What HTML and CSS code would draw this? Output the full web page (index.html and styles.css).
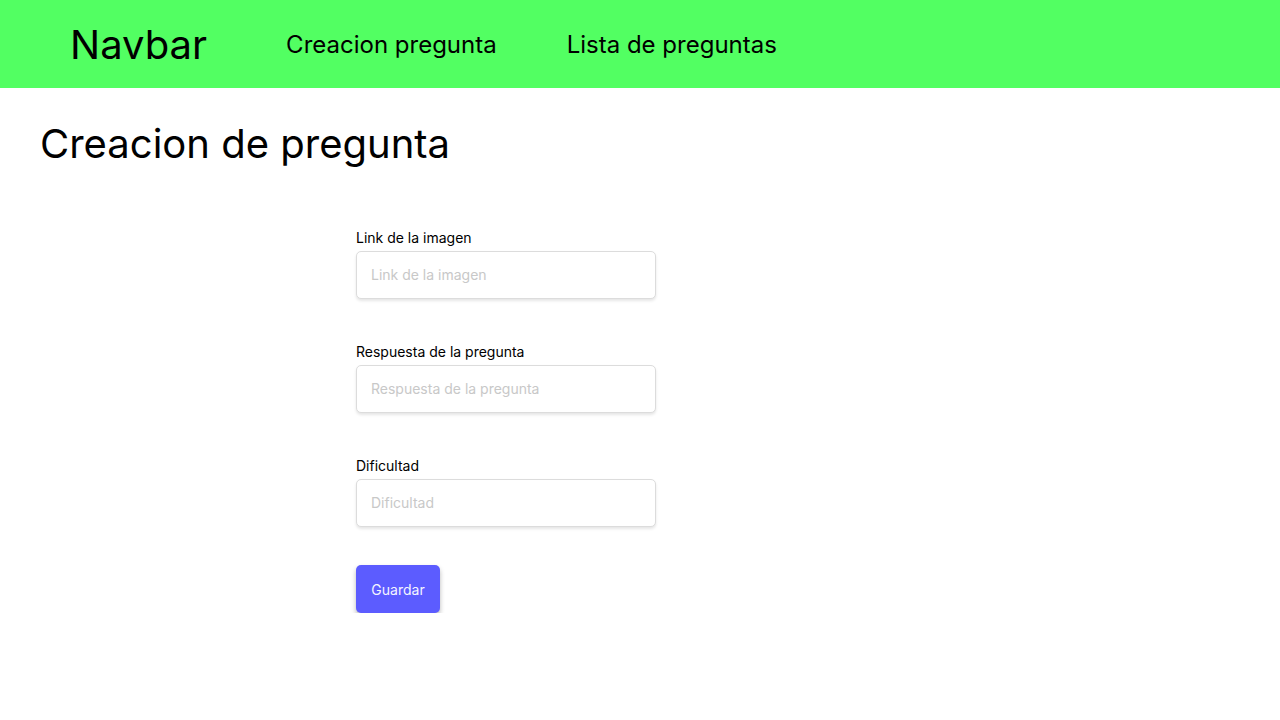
FILE: index.html
```html
<!DOCTYPE html>
<html lang="es">
<head>
<meta charset="utf-8">
<title>Creacion de pregunta</title>
<link rel="stylesheet" href="styles.css">
</head>
<body>
<nav class="navbar">
  <span class="brand">Navbar</span>
  <a class="nav-link" href="#">Creacion pregunta</a>
  <a class="nav-link" href="#">Lista de preguntas</a>
</nav>
<main class="page">
  <h1 class="title">Creacion de pregunta</h1>
  <form class="form">
    <div class="field">
      <label class="label">Link de la imagen</label>
      <input class="input" type="text" placeholder="Link de la imagen">
    </div>
    <div class="field">
      <label class="label">Respuesta de la pregunta</label>
      <input class="input" type="text" placeholder="Respuesta de la pregunta">
    </div>
    <div class="field">
      <label class="label">Dificultad</label>
      <input class="input" type="text" placeholder="Dificultad">
    </div>
    <button class="btn" type="button">Guardar</button>
  </form>
</main>
</body>
</html>
```
FILE: styles.css
```css
* { box-sizing: border-box; }
body {
  margin: 0;
  font-family: Inter, "Noto Sans", sans-serif;
  color: #000;
  background: #fff;
}
.navbar {
  height: 88px;
  background: #52ff62;
  display: flex;
  align-items: center;
  padding-left: 70px;
}
.brand {
  font-size: 40px;
  margin-right: 79px;
}
.nav-link {
  font-size: 24px;
  color: #000;
  text-decoration: none;
  margin-right: 70px;
}
.page {
  padding: 0 40px;
}
.title {
  font-size: 40px;
  font-weight: 400;
  margin: 32px 0 0;
  line-height: 48px;
}
.form {
  margin: 61px 0 0 316px;
  width: 300px;
  display: flex;
  flex-direction: column;
}
.field {
  display: flex;
  flex-direction: column;
  margin-bottom: 44px;
}
.field:last-of-type { margin-bottom: 38px; }
.label {
  font-size: 14px;
  line-height: 18px;
  margin-bottom: 4px;
}
.input {
  width: 300px;
  height: 48px;
  border: 1px solid #dcdcdc;
  border-radius: 5px;
  padding: 0 14px 2px;
  font-family: inherit;
  font-size: 14px;
  box-shadow: 0 2px 3px rgba(0,0,0,0.1);
  outline: none;
}
.input::placeholder { color: #c8c8c8; }
.btn {
  width: 84px;
  height: 48px;
  background: #5c5cff;
  color: #f4f4ff;
  border: none;
  border-radius: 5px;
  font-family: inherit;
  font-size: 14px;
  padding-bottom: 1px;
  box-shadow: 0 3px 5px rgba(0,0,0,0.28);
}
```
